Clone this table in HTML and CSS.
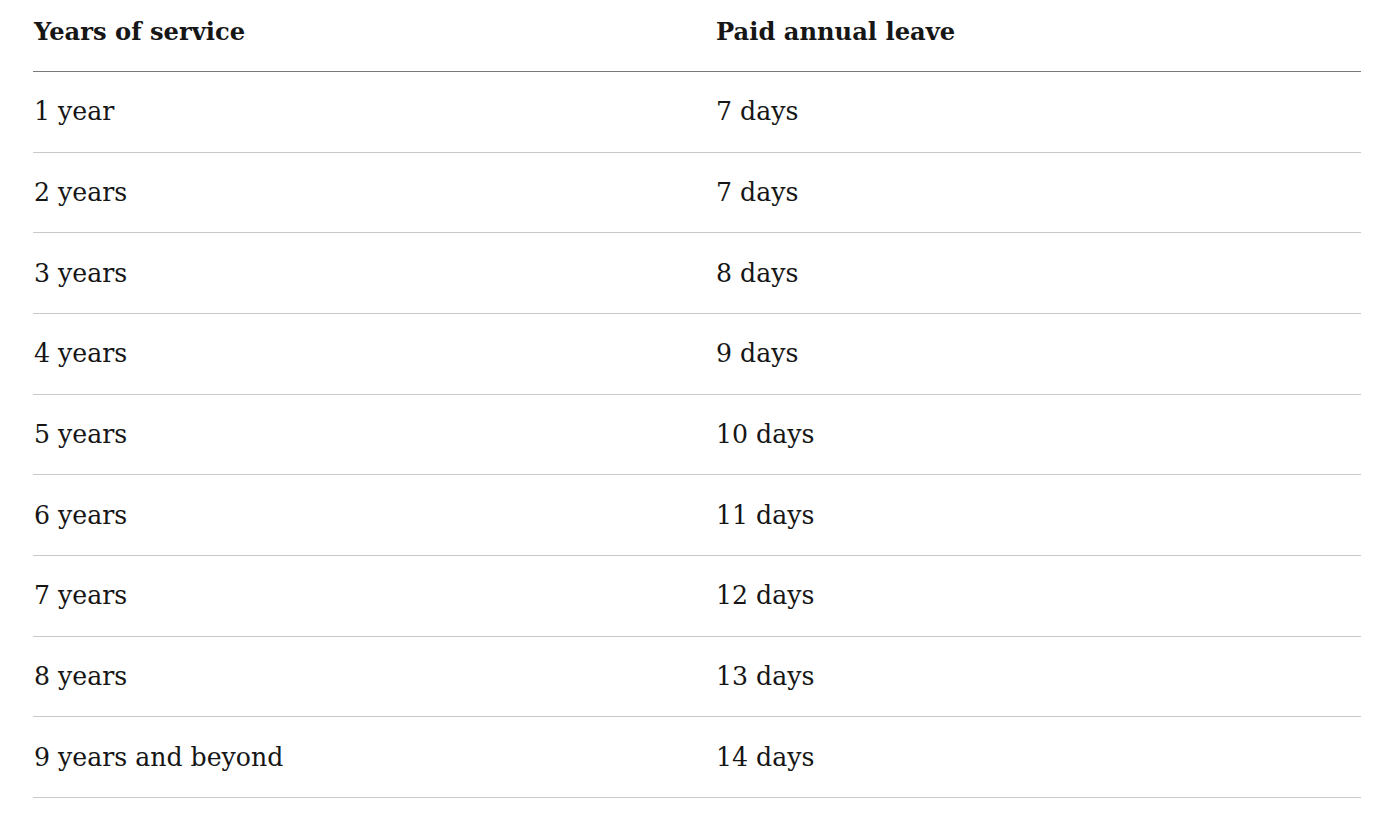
FILE: index.html
```html
<!DOCTYPE html>
<html>
<head>
<meta charset="utf-8">
<link rel="stylesheet" href="styles.css">
</head>
<body>
<div class="page">
  <div class="table">
    <div class="row head">
      <div class="cell">Years of service</div>
      <div class="cell">Paid annual leave</div>
    </div>
    <div class="row"><div class="cell">1 year</div><div class="cell">7 days</div></div>
    <div class="row"><div class="cell">2 years</div><div class="cell">7 days</div></div>
    <div class="row"><div class="cell">3 years</div><div class="cell">8 days</div></div>
    <div class="row"><div class="cell">4 years</div><div class="cell">9 days</div></div>
    <div class="row"><div class="cell">5 years</div><div class="cell">10 days</div></div>
    <div class="row"><div class="cell">6 years</div><div class="cell">11 days</div></div>
    <div class="row"><div class="cell">7 years</div><div class="cell">12 days</div></div>
    <div class="row"><div class="cell">8 years</div><div class="cell">13 days</div></div>
    <div class="row"><div class="cell">9 years and beyond</div><div class="cell">14 days</div></div>
  </div>
</div>
</body>
</html>
```
FILE: styles.css
```css
html, body {
  margin: 0;
  padding: 0;
  background: #ffffff;
}
.page {
  padding: 0 21px 0 33px;
  font-family: "DejaVu Serif", serif;
  color: #161616;
}
.table {
  display: flex;
  flex-direction: column;
}
.row {
  display: grid;
  grid-template-columns: 682px 1fr;
  box-sizing: border-box;
  height: 80.67px;
  align-items: center;
  border-bottom: 1px solid #c9c9c9;
  font-size: 25.2px;
}
.row .cell {
  padding-left: 1px;
}
.head {
  height: 72px;
  align-items: start;
  border-bottom: 1px solid #7a7a7a;
  font-weight: bold;
  font-size: 24.2px;
}
.head .cell {
  padding-top: 17px;
}
```
